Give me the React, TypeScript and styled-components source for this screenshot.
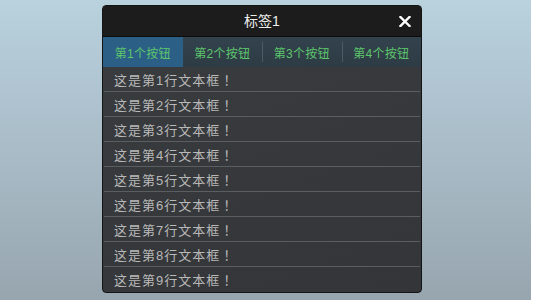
import styled, { createGlobalStyle } from "styled-components";

const GlobalStyle = createGlobalStyle`
  html, body {
    margin: 0;
    padding: 0;
    background: #ffffff;
  }
  body {
    font-family: "Liberation Sans", "Noto Sans CJK SC", sans-serif;
  }
`;

const Stage = styled.div`
  width: 531px;
  height: 300px;
  box-sizing: border-box;
  padding: 5px 0 0 102px;
  background: linear-gradient(180deg, #b9d2de 0%, #a9bcc8 50%, #97a5ae 100%);
  display: flex;
  align-items: flex-start;
`;

const Panel = styled.div`
  width: 320px;
  box-sizing: border-box;
  border: 1px solid #141414;
  border-radius: 4px;
  overflow: hidden;
  display: flex;
  flex-direction: column;
  background: linear-gradient(160deg, #3a3d40 0%, #333538 100%);
`;

const Header = styled.div`
  height: 30px;
  background: #1c1c1c;
  border-bottom: 1px solid #0c0c0c;
  display: flex;
  align-items: center;
  justify-content: center;
  position: relative;
`;

const Title = styled.span`
  color: #ececec;
  font-size: 14px;
  font-family: "Liberation Sans", "Noto Sans CJK SC", sans-serif;
  margin-top: -2px;
`;

const CloseButton = styled.button`
  position: absolute;
  right: 9px;
  top: 8px;
  width: 14px;
  height: 14px;
  padding: 0;
  border: none;
  background: transparent;
  cursor: pointer;
  display: flex;
  align-items: center;
  justify-content: center;
`;

const TabBar = styled.div`
  height: 30px;
  display: grid;
  grid-template-columns: repeat(4, 1fr);
  background: linear-gradient(180deg, #33434d 0%, #2d3b44 100%);
`;

const Tab = styled.div<{ $active?: boolean; $divider?: boolean }>`
  display: flex;
  align-items: center;
  justify-content: center;
  position: relative;
  font-size: 12px;
  letter-spacing: 0.3px;
  color: #5dc56c;
  background: ${(p) => (p.$active ? "#2b5f86" : "transparent")};
  font-family: "Liberation Sans", "Noto Sans CJK SC", sans-serif;

  &::before {
    content: "";
    display: ${(p) => (p.$divider ? "block" : "none")};
    position: absolute;
    left: 0;
    top: 5px;
    bottom: 5px;
    width: 1px;
    background: #4a5a64;
  }
`;

const RowList = styled.div`
  display: flex;
  flex-direction: column;
  padding: 0 1px;
`;

const Row = styled.div<{ $last?: boolean }>`
  height: 24px;
  display: flex;
  align-items: center;
  padding-left: 10px;
  border-bottom: 1px solid ${(p) => (p.$last ? "transparent" : "#5b5e61")};
  color: #b9b9b9;
  font-size: 13px;
  letter-spacing: 1px;
  font-family: "Liberation Sans", "Noto Sans CJK SC", sans-serif;
`;

const Punct = styled.span`
  font-family: "Noto Sans CJK TC", sans-serif;
`;

const tabs = ["第1个按钮", "第2个按钮", "第3个按钮", "第4个按钮"];
const rows = Array.from({ length: 9 }, (_, i) => `这是第${i + 1}行文本框`);

export default function App() {
  return (
    <>
      <GlobalStyle />
      <Stage>
        <Panel>
          <Header>
            <Title>标签1</Title>
            <CloseButton aria-label="关闭">
              <svg width="12" height="11" viewBox="0 0 12 11">
                <path
                  d="M1.5 1 L10.5 10 M10.5 1 L1.5 10"
                  stroke="#ffffff"
                  strokeWidth="2.4"
                  strokeLinecap="square"
                />
              </svg>
            </CloseButton>
          </Header>
          <TabBar>
            {tabs.map((t, i) => (
              <Tab key={t} $active={i === 0} $divider={i > 1}>
                {t}
              </Tab>
            ))}
          </TabBar>
          <RowList>
            {rows.map((r, i) => (
              <Row key={r} $last={i === rows.length - 1}>
                {r}
                <Punct>！</Punct>
              </Row>
            ))}
          </RowList>
        </Panel>
      </Stage>
    </>
  );
}
